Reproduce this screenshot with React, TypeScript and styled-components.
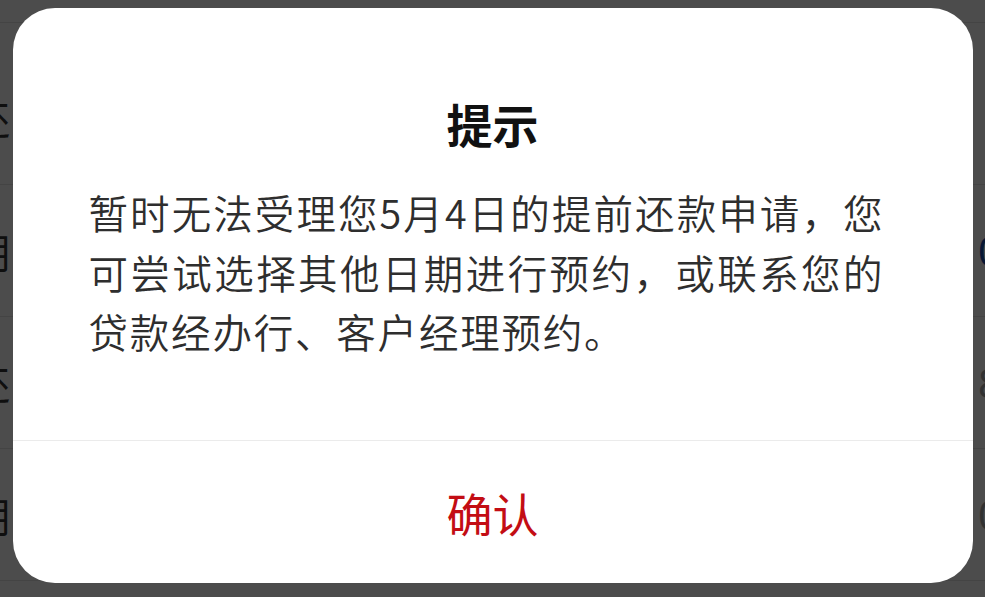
import React from "react";
import styled, { createGlobalStyle } from "styled-components";

const GlobalStyle = createGlobalStyle`
  html, body {
    margin: 0;
    padding: 0;
    overflow: hidden;
    background: #ffffff;
  }
  body {
    font-family: "Noto Sans CJK SC", "Noto Sans", sans-serif;
  }
  * { box-sizing: border-box; }
`;

const Screen = styled.div`
  position: relative;
  width: 985px;
  height: 597px;
  overflow: hidden;
  background: #ffffff;
`;

const List = styled.div`
  display: flex;
  flex-direction: column;
`;

const TopStrip = styled.div`
  height: 23px;
  border-bottom: 1px solid #e3e3e3;
`;

const Row = styled.div<{ $lead?: boolean }>`
  height: ${(p) => (p.$lead ? "162px" : "132px")};
  padding-top: ${(p) => (p.$lead ? "29px" : "0")};
  display: flex;
  align-items: center;
  justify-content: space-between;
  border-bottom: 1px solid #e3e3e3;
  font-size: 40px;
  line-height: 1;
`;

const RowLabel = styled.span`
  margin-left: -30px;
  color: #333333;
`;

const RowValue = styled.span<{ $tone: "blue" | "gray" }>`
  margin-right: -16px;
  color: ${(p) => (p.$tone === "blue" ? "#1c4fb0" : "#a6a6a6")};
  font-family: "Noto Sans", sans-serif;
`;

const Overlay = styled.div`
  position: absolute;
  inset: 0;
  background: rgba(0, 0, 0, 0.7);
  display: flex;
  justify-content: center;
  align-items: flex-start;
  padding-top: 8px;
`;

const Dialog = styled.div`
  width: 960px;
  height: 575px;
  background: #ffffff;
  border-radius: 42px;
  display: flex;
  flex-direction: column;
  overflow: hidden;
  padding-top: 88px;
`;

const Title = styled.h2`
  margin: 0;
  text-align: center;
  font-size: 46px;
  line-height: 55px;
  font-weight: 700;
  color: #111111;
`;

const Message = styled.p`
  margin: 31px 0 0;
  padding: 0 90px 0 76px;
  font-size: 39.5px;
  line-height: 59.5px;
  font-weight: 350;
  color: #2e2e2e;
`;

const Line = styled.span<{ $fill?: boolean; $spread?: boolean }>`
  display: block;
  white-space: nowrap;
  text-align: ${(p) => (p.$fill ? "justify" : "left")};
  text-align-last: ${(p) => (p.$fill ? "justify" : "left")};
  letter-spacing: ${(p) => (p.$spread ? "1.8px" : "0")};
`;

const Footer = styled.div`
  margin-top: auto;
  border-top: 1px solid #ebebeb;
  height: 143px;
  display: flex;
`;

const ConfirmButton = styled.button`
  flex: 1;
  border: none;
  background: transparent;
  padding: 0;
  font-family: "Noto Sans CJK SC", "Noto Sans", sans-serif;
  font-size: 46px;
  font-weight: 400;
  color: #c30d14;
  cursor: pointer;
`;

const rows = [
  { label: "还", value: "", tone: "gray" as const, lead: true },
  { label: "期", value: "0", tone: "blue" as const },
  { label: "还", value: "8", tone: "gray" as const },
  { label: "期", value: "0", tone: "gray" as const },
];

export default function App() {
  return (
    <>
      <GlobalStyle />
      <Screen>
        <List>
          <TopStrip />
          {rows.map((r, i) => (
            <Row key={i} $lead={r.lead}>
              <RowLabel>{r.label}</RowLabel>
              <RowValue $tone={r.tone}>{r.value}</RowValue>
            </Row>
          ))}
        </List>
        <Overlay>
          <Dialog role="dialog">
            <Title>提示</Title>
            <Message>
              <Line $fill>暂时无法受理您5月4日的提前还款申请，您</Line>
              <Line $fill>可尝试选择其他日期进行预约，或联系您的</Line>
              <Line $spread>贷款经办行、客户经理预约。</Line>
            </Message>
            <Footer>
              <ConfirmButton type="button">确认</ConfirmButton>
            </Footer>
          </Dialog>
        </Overlay>
      </Screen>
    </>
  );
}
